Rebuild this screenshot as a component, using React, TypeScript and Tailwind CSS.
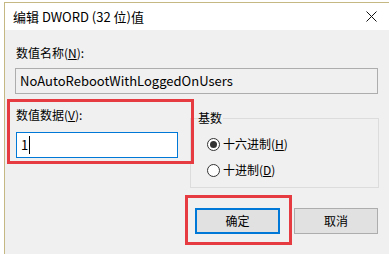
import React from "react"

const font = { fontFamily: '"Noto Sans CJK SC", "Noto Sans", sans-serif' }

function Radio({ checked, label, accel }: { checked: boolean; label: string; accel: string }) {
  return (
    <div className="flex items-center h-[16px]">
      <span className="w-[13px] h-[13px] rounded-full border border-[#333] bg-white flex items-center justify-center">
        {checked && <span className="w-[7px] h-[7px] rounded-full bg-[#333]" />}
      </span>
      <span className="ml-[3px] text-[12px] leading-[16px] text-black">
        {label}(<span className="underline">{accel}</span>)
      </span>
    </div>
  )
}

export default function App() {
  return (
    <div className="w-[389px] h-[254px] overflow-hidden bg-white pl-[4px] pt-[2px]" style={font}>
      <div className="relative w-[400px] h-[270px] border-l border-t border-[#c6b882] bg-[#f0f0f0]">
        {/* Title bar */}
        <div className="h-[27px] bg-white flex items-center pl-[8px]">
          <span className="text-[13px] leading-[16px] text-black">编辑 DWORD (32 位)值</span>
          <svg className="ml-auto mr-[27px]" width="11" height="11" viewBox="0 0 11 11">
            <path d="M0.5 0.5 L10.5 10.5 M10.5 0.5 L0.5 10.5" stroke="#111" strokeWidth="1" />
          </svg>
        </div>

        {/* Body */}
        <div className="pl-[10px] pt-[15px]">
          <div className="ml-[1px] text-[12px] leading-[16px] text-black">
            数值名称(<span className="underline">N</span>):
          </div>
          <div className="mt-[7px] w-[363px] h-[26px] border border-[#adadad] bg-[#f0f0f0] flex items-center pl-[4px] text-[13px] text-black">
            NoAutoRebootWithLoggedOnUsers
          </div>

          <div className="mt-[13px] flex">
            <div className="w-[175px]">
              <div className="ml-[1px] text-[12px] leading-[16px] text-black">
                数值数据(<span className="underline">V</span>):
              </div>
              <div className="mt-[9px] ml-[1px] w-[162px] h-[26px] border border-[#0078d7] bg-white flex items-center pl-[4px] text-[13px] text-black">
                1<span className="ml-[1px] w-[1px] h-[18px] bg-black" />
              </div>
            </div>

            <div className="relative mt-[11px] w-[189px] h-[70px] border border-[#dcdcdc]">
              <span className="absolute -top-[9px] left-[7px] bg-[#f0f0f0] text-[12px] leading-[16px] text-black pr-[1px]">
                基数
              </span>
              <div className="pl-[16px] pt-[17px] flex flex-col gap-[10px]">
                <Radio checked label="十六进制" accel="H" />
                <Radio checked={false} label="十进制" accel="D" />
              </div>
            </div>
          </div>

          <div className="mt-[20px] ml-[180px] flex gap-[14px]">
            <div className="w-[85px] h-[26px] border-2 border-[#0078d7] bg-[#e1e1e1] flex items-center justify-center text-[12px] text-black">
              确定
            </div>
            <div className="w-[84px] h-[26px] border border-[#adadad] bg-[#e1e1e1] flex items-center justify-center text-[12px] text-black">
              取消
            </div>
          </div>
        </div>

        {/* Annotation boxes */}
        <div className="absolute left-[2px] top-[96px] w-[187px] h-[65px] border-[3px] border-[#e63c41]" />
        <div className="absolute left-[180px] top-[192px] w-[107px] h-[50px] border-[3px] border-[#e63c41]" />
      </div>
    </div>
  )
}
